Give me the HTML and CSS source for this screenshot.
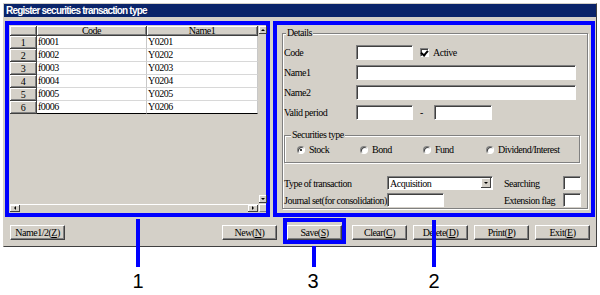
FILE: index.html
```html
<!DOCTYPE html>
<html lang="en">
<head>
    <meta charset="UTF-8">
    <meta name="viewport" content="width=device-width, initial-scale=1.0">
    <title>Register securities transaction type</title>
    <link rel="stylesheet" href="styles.css">
</head>
<body>
    <div class="screen">
        <div class="window">
            <div class="titlebar">Register securities transaction type</div>
            <div class="window-body">
                <div class="panels">
                    <!-- 1: list of transaction types -->
                    <div class="mark mark-list">
                        <div class="grid">
                            <div class="grid-top">
                                <table class="grid-table">
                                    <colgroup>
                                        <col class="col-num">
                                        <col class="col-code">
                                        <col class="col-name">
                                    </colgroup>
                                    <thead>
                                        <tr><th></th><th>Code</th><th>Name1</th></tr>
                                    </thead>
                                    <tbody>
                                        <tr><th>1</th><td>f0001</td><td>Y0201</td></tr>
                                        <tr><th>2</th><td>f0002</td><td>Y0202</td></tr>
                                        <tr><th>3</th><td>f0003</td><td>Y0203</td></tr>
                                        <tr><th>4</th><td>f0004</td><td>Y0204</td></tr>
                                        <tr><th>5</th><td>f0005</td><td>Y0205</td></tr>
                                        <tr class="last"><th>6</th><td>f0006</td><td>Y0206</td></tr>
                                    </tbody>
                                </table>
                                <div class="vscroll">
                                    <span class="sb-btn"><span class="arrow arrow-up"></span></span>
                                    <span class="sb-btn"><span class="arrow arrow-down"></span></span>
                                </div>
                            </div>
                            <div class="grid-bottom">
                                <div class="hscroll">
                                    <span class="sb-btn"><span class="arrow arrow-left"></span></span>
                                    <span class="sb-btn"><span class="arrow arrow-right"></span></span>
                                </div>
                                <span class="corner"></span>
                            </div>
                        </div>
                    </div>

                    <!-- 2: details of the selected type -->
                    <div class="mark mark-detail">
                        <div class="detail-panel">
                            <div class="group details">
                                <div class="group-title">Details</div>
                                <div class="form-row first">
                                    <span class="label-col">Code</span>
                                    <span class="field field-short"></span>
                                    <span class="check checked"></span>
                                    <span class="check-label">Active</span>
                                </div>
                                <div class="form-row">
                                    <span class="label-col">Name1</span>
                                    <span class="field field-long"></span>
                                </div>
                                <div class="form-row">
                                    <span class="label-col">Name2</span>
                                    <span class="field field-long"></span>
                                </div>
                                <div class="form-row">
                                    <span class="label-col">Valid period</span>
                                    <span class="field field-short"></span>
                                    <span class="dash">-</span>
                                    <span class="field field-date"></span>
                                </div>

                                <div class="group sec-type">
                                    <div class="group-title">Securities type</div>
                                    <div class="radio-row">
                                        <span class="radio-item"><span class="radio selected"></span>Stock</span>
                                        <span class="radio-item"><span class="radio"></span>Bond</span>
                                        <span class="radio-item"><span class="radio"></span>Fund</span>
                                        <span class="radio-item"><span class="radio"></span>Dividend/Interest</span>
                                    </div>
                                </div>

                                <div class="tx-grid">
                                    <span>Type of transaction</span>
                                    <span class="combo"><span class="combo-text">Acquisition</span><span class="combo-btn"><span class="arrow arrow-down"></span></span></span>
                                    <span></span>
                                    <span>Searching</span>
                                    <span class="field field-tiny"></span>

                                    <span>Journal set(for consolidation)</span>
                                    <span class="field field-journal"></span>
                                    <span></span>
                                    <span>Extension flag</span>
                                    <span class="field field-tiny"></span>
                                </div>
                            </div>
                        </div>
                    </div>
                </div>

                <div class="button-row">
                    <button class="btn">Name1/2(<u>Z</u>)</button>
                    <span class="spacer"></span>
                    <button class="btn">New(<u>N</u>)</button>
                    <!-- 3: save button -->
                    <div class="mark mark-save">
                        <button class="btn">Save(<u>S</u>)</button>
                    </div>
                    <button class="btn">Clear(<u>C</u>)</button>
                    <button class="btn">Delete(<u>D</u>)</button>
                    <button class="btn">Print(<u>P</u>)</button>
                    <button class="btn">Exit(<u>E</u>)</button>
                </div>
            </div>
        </div>

        <!-- callout lines and numbers -->
        <span class="callout-line line-1"></span>
        <span class="callout-line line-2"></span>
        <span class="callout-line line-3"></span>
        <span class="callout-num num-1">1</span>
        <span class="callout-num num-2">2</span>
        <span class="callout-num num-3">3</span>
    </div>
</body>
</html>
```

FILE: styles.css
```css
* {
    box-sizing: border-box;
}
body {
    margin: 0;
    background: #fff;
    font-family: "Liberation Serif", "Times New Roman", serif;
    font-size: 10px;
    letter-spacing: -0.5px;
    color: #000;
}
.screen {
    position: relative;
    width: 600px;
    height: 295px;
}
.window {
    margin: 3px 0 0 3px;
    width: 594px;
    background: #d4d0c8;
    border: 1px solid;
    border-color: #d4d0c8 #404040 #404040 #d4d0c8;
}
.titlebar {
    height: 13px;
    line-height: 13px;
    padding-left: 2px;
    background: #0a246a;
    color: #fff;
    font-family: "Liberation Sans", Arial, sans-serif;
    font-weight: bold;
    font-size: 10px;
    letter-spacing: -0.8px;
}
.window-body {
    padding: 4px 1px 2px;
}
.panels {
    display: flex;
    gap: 3px;
    height: 196px;
}
.mark {
    border: 4px solid #0000ff;
}
.mark-list {
    width: 265px;
}
.mark-detail {
    flex: 1;
}

/* grid */
.grid {
    height: 100%;
    display: flex;
    flex-direction: column;
    padding: 1px 0 0 1px;
}
.grid-top {
    flex: 1;
    display: flex;
    gap: 1px;
}
.grid-table {
    width: 248px;
    height: 88px;
    table-layout: fixed;
    border-collapse: separate;
    border-spacing: 0;
}
.col-num {
    width: 27px;
}
.col-code {
    width: 110px;
}
.col-name {
    width: 111px;
}
.grid-table th {
    padding: 0;
    height: 10px;
    line-height: 9px;
    font-weight: normal;
    background: #d4d0c8;
    border-right: 1px solid #404040;
    border-bottom: 1px solid #404040;
    box-shadow: inset 1px 1px #fff, inset -1px -1px #808080;
}
.grid-table tbody th {
    height: 13px;
}
.grid-table td {
    height: 13px;
    padding: 0 1px;
    line-height: 12px;
    background: #fff;
    border-right: 1px solid #c8c8c8;
    border-bottom: 1px solid #d8d8d8;
    white-space: nowrap;
}
.grid-table tr.last td {
    border-bottom-color: #000;
}
.vscroll {
    width: 7px;
    display: flex;
    flex-direction: column;
    justify-content: space-between;
    padding-bottom: 1px;
}
.grid-bottom {
    height: 8px;
    display: flex;
    gap: 1px;
    margin-bottom: 1px;
}
.hscroll {
    width: 248px;
    display: flex;
    justify-content: space-between;
    border-top: 1px solid #fff;
}
.corner {
    flex: 1;
    border-top: 1px solid #fff;
    border-left: 1px solid #fff;
    border-bottom: 1px solid #808080;
}
.sb-btn {
    display: flex;
    align-items: center;
    justify-content: center;
    width: 8px;
    height: 8px;
    background: #d4d0c8;
    border-right: 1px solid #404040;
    border-bottom: 1px solid #404040;
    box-shadow: inset 1px 1px #fff;
}
.hscroll .sb-btn {
    width: 10px;
    height: 7px;
}
.arrow {
    width: 0;
    height: 0;
    border: 2px solid transparent;
}
.arrow-up {
    border-bottom-color: #000;
    margin-top: -2px;
}
.arrow-down {
    border-top-color: #000;
    margin-bottom: -2px;
}
.arrow-left {
    border-right-color: #000;
    margin-left: -2px;
}
.arrow-right {
    border-left-color: #000;
    margin-right: -2px;
}

/* details */
.detail-panel {
    height: 100%;
    display: flex;
    padding: 8px 3px 4px 5px;
}
.group {
    border: 1px solid #808080;
    box-shadow: inset 1px 1px #fff, 1px 1px #fff;
}
.details {
    flex: 1;
    padding: 0 1px;
}
.group-title {
    width: fit-content;
    height: 10px;
    line-height: 10px;
    margin: -6px 0 0 2px;
    padding: 0 1px;
    background: #d4d0c8;
}
.form-row {
    display: flex;
    align-items: center;
    height: 15px;
    margin-top: 5px;
}
.form-row.first {
    margin-top: 7px;
}
.label-col {
    width: 72px;
    flex-shrink: 0;
}
.field {
    display: block;
    flex-shrink: 0;
    height: 15px;
    background: #fff;
    border: 1px solid;
    border-color: #808080 #fff #fff #808080;
    box-shadow: inset 1px 1px #404040;
}
.field-short {
    width: 57px;
}
.field-long {
    width: 220px;
}
.field-date {
    width: 58px;
}
.field-journal {
    width: 57px;
    height: 14px;
}
.field-tiny {
    width: 18px;
    height: 14px;
}
.dash {
    width: 21px;
    padding-left: 7px;
}
.check {
    flex-shrink: 0;
    width: 9px;
    height: 9px;
    margin: 0 4px 0 7px;
    background: #fff;
    border: 1px solid;
    border-color: #808080 #fff #fff #808080;
    box-shadow: inset 1px 1px #404040;
    position: relative;
}
.check.checked::after {
    content: "";
    position: absolute;
    left: 1px;
    top: 0;
    width: 3px;
    height: 5px;
    border: solid #000;
    border-width: 0 2px 2px 0;
    transform: rotate(40deg);
}
.sec-type {
    width: 296px;
    height: 28px;
    margin-top: 15px;
    padding-left: 1px;
}
.sec-type .group-title {
    margin-left: 5px;
}
.radio-row {
    display: grid;
    grid-template-columns: 63px 63px 63px 1fr;
    margin-top: 5px;
    padding-left: 11px;
    height: 10px;
    line-height: 10px;
}
.radio-item {
    display: flex;
    align-items: center;
    white-space: nowrap;
}
.radio {
    flex-shrink: 0;
    width: 8px;
    height: 8px;
    margin-right: 4px;
    border-radius: 50%;
    background: #fff;
    border: 1px solid;
    border-color: #808080 #fff #fff #808080;
    box-shadow: inset 1px 1px #404040;
    position: relative;
}
.radio.selected::after {
    content: "";
    position: absolute;
    left: 2px;
    top: 2px;
    width: 2px;
    height: 2px;
    border-radius: 50%;
    background: #000;
}
.tx-grid {
    display: grid;
    grid-template-columns: 103px 106px 11px 59px 18px;
    grid-auto-rows: 14px;
    row-gap: 3px;
    align-items: center;
    margin-top: 13px;
    white-space: nowrap;
}
.combo {
    display: flex;
    height: 14px;
    background: #fff;
    border: 1px solid;
    border-color: #808080 #fff #fff #808080;
    box-shadow: inset 1px 1px #404040;
    padding: 1px 1px 1px 2px;
}
.combo-text {
    flex: 1;
    line-height: 11px;
}
.combo-btn {
    display: flex;
    align-items: center;
    justify-content: center;
    width: 10px;
    background: #d4d0c8;
    border-right: 1px solid #404040;
    border-bottom: 1px solid #404040;
    box-shadow: inset 1px 1px #fff;
}

/* buttons */
.button-row {
    display: flex;
    align-items: flex-start;
    gap: 6px;
    height: 26px;
    margin-top: 1px;
    padding: 0 5px;
}
.spacer {
    flex: 1;
}
.btn {
    width: 55px;
    height: 15px;
    margin-top: 7px;
    padding: 0;
    font-family: inherit;
    font-size: 10px;
    letter-spacing: -0.5px;
    line-height: 12px;
    color: #000;
    background: #d4d0c8;
    border: 1px solid;
    border-color: #fff #404040 #404040 #fff;
    box-shadow: inset -1px -1px #808080;
}
.mark-save {
    padding-top: 3px;
}
.mark-save .btn {
    margin-top: 0;
}

/* callouts */
.callout-line {
    position: absolute;
    width: 4px;
    background: #0000ff;
}
.line-1 {
    left: 136px;
    top: 216px;
    height: 48px;
}
.line-2 {
    left: 432px;
    top: 217px;
    height: 47px;
}
.line-3 {
    left: 312px;
    top: 243px;
    height: 21px;
}
.callout-num {
    position: absolute;
    top: 268px;
    width: 20px;
    text-align: center;
    font-family: "Liberation Sans", Arial, sans-serif;
    font-size: 20px;
    line-height: 20px;
    letter-spacing: 0;
}
.num-1 {
    left: 128px;
}
.num-2 {
    left: 424px;
}
.num-3 {
    left: 303px;
}
```
